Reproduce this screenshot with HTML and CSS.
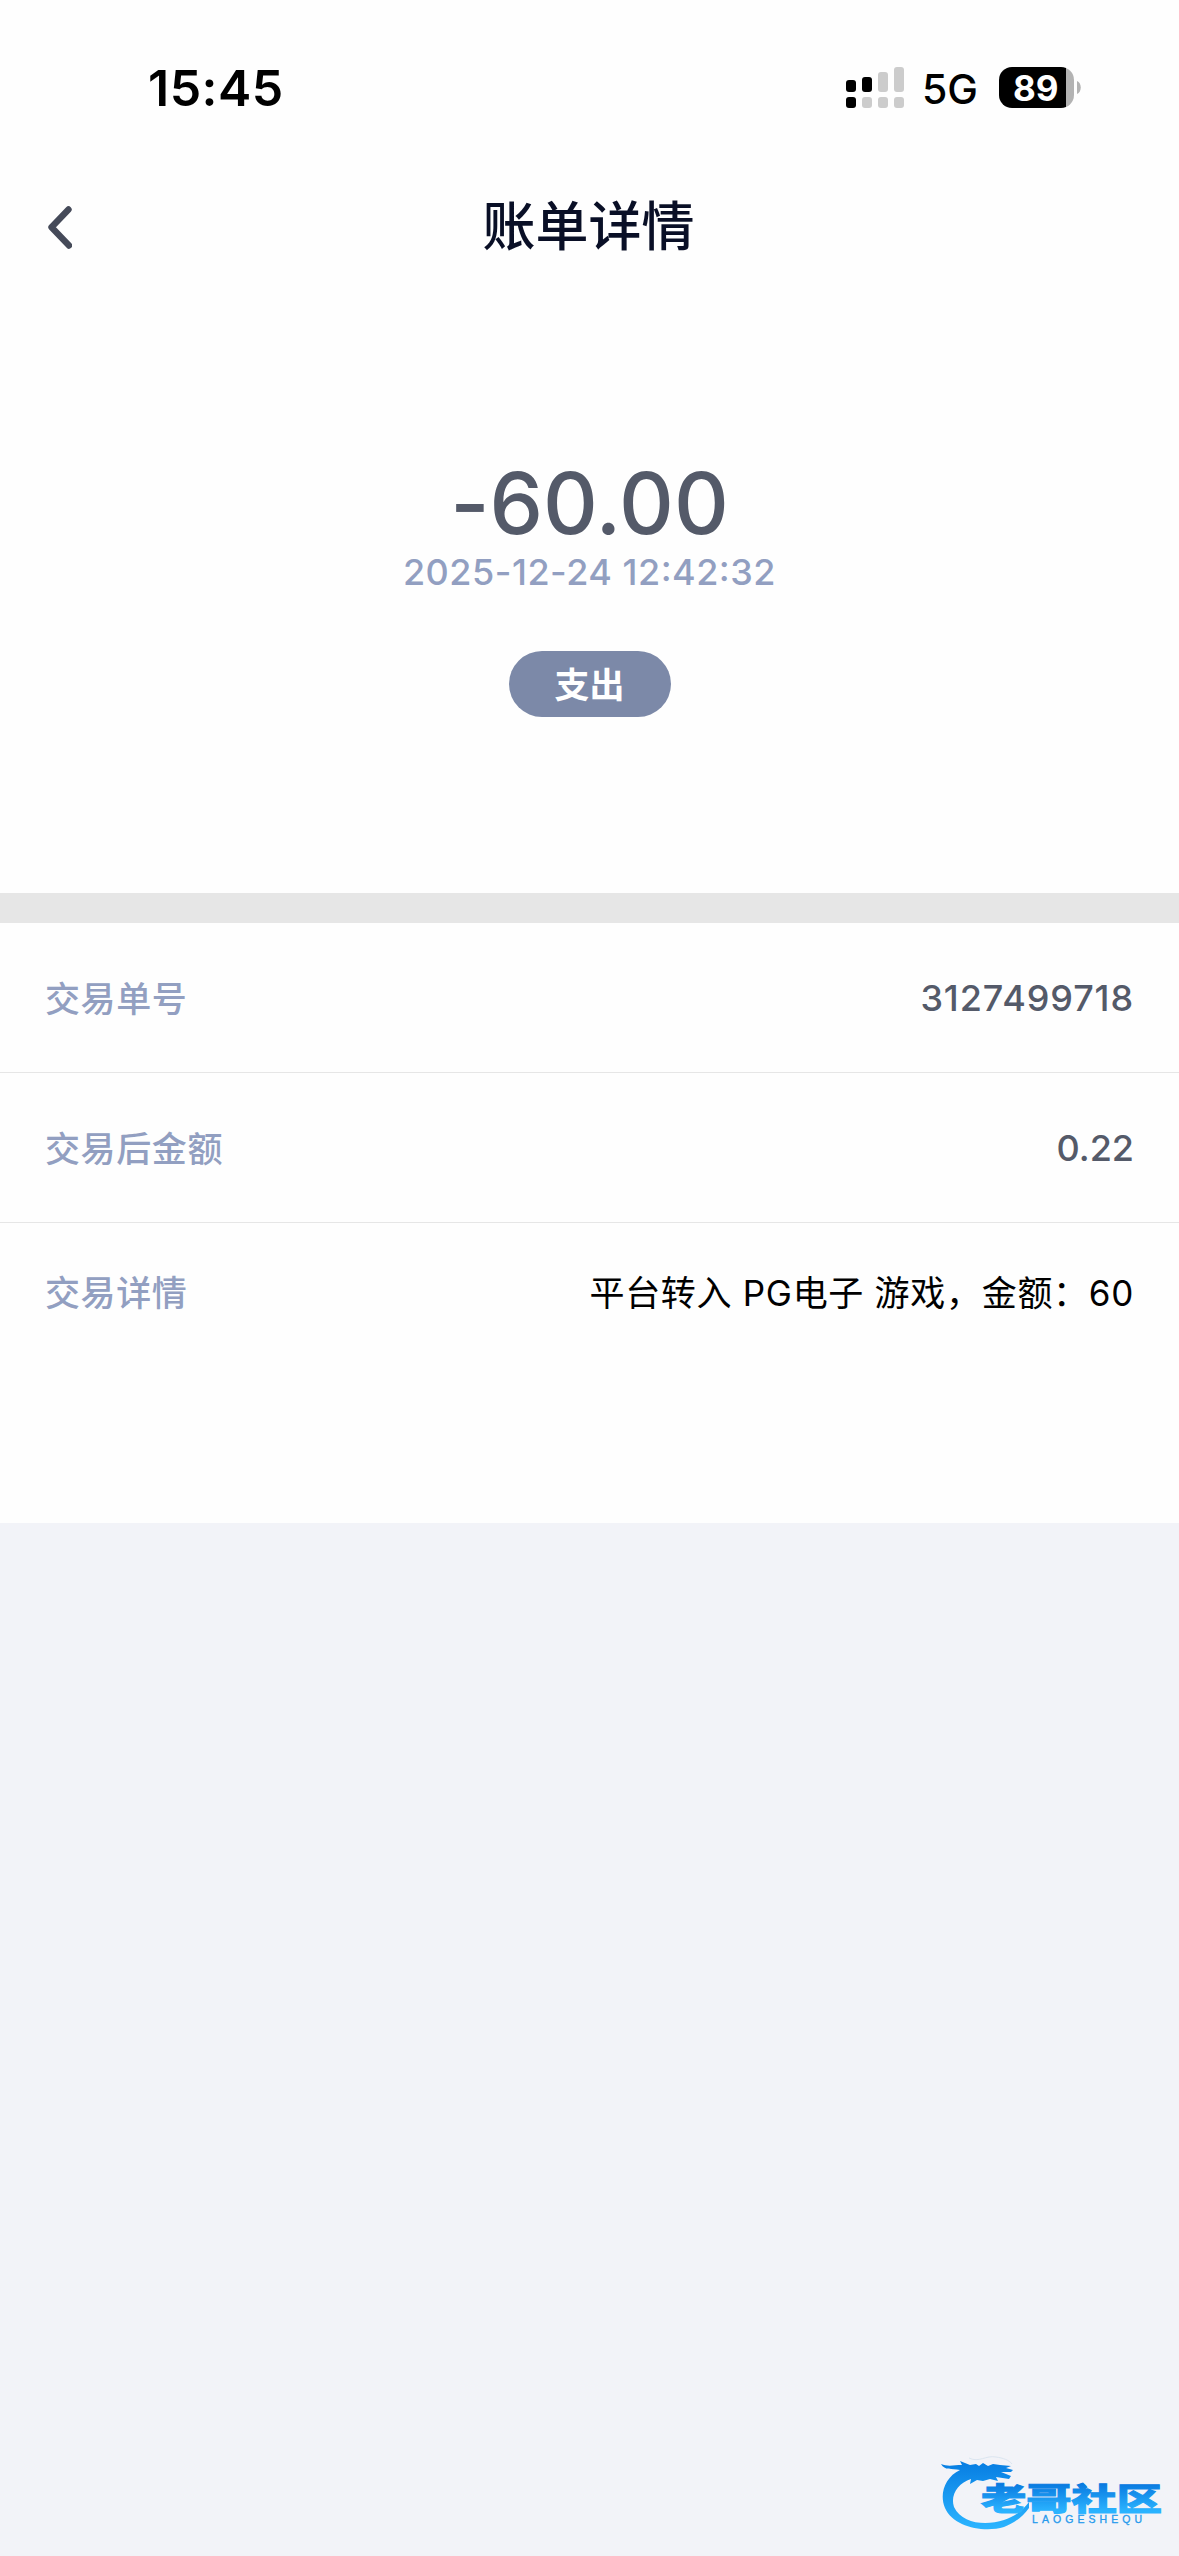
FILE: index.html
```html
<!DOCTYPE html>
<html lang="zh-CN">
<head>
<meta charset="utf-8">
<title>账单详情</title>
<link rel="stylesheet" href="styles.css">
</head>
<body>
<main class="screen">
  <header class="status">
    <span class="clock">15:45</span>
    <div class="indicators">
      <svg class="signal" width="58" height="41" viewBox="0 0 58 41">
        <g fill="#000"><rect y="13" width="10" height="12" rx="3"/><rect x="16" y="10" width="10" height="15" rx="3"/><rect y="30" width="10" height="11" rx="3"/></g>
        <g fill="#ccc"><rect x="32" y="5" width="10" height="20" rx="3"/><rect x="48" width="10" height="25" rx="3"/><rect x="16" y="30" width="10" height="11" rx="3"/><rect x="32" y="30" width="10" height="11" rx="3"/><rect x="48" y="30" width="10" height="11" rx="3"/></g>
      </svg>
      <span class="network">5G</span>
      <div class="battery"><span class="charge">89</span><svg class="cap" width="4" height="13" viewBox="0 0 4 13"><path d="M0 0C5 2 5 11 0 13z" fill="#b3b3b3"/></svg></div>
    </div>
  </header>
  <nav class="navbar">
    <svg class="back" width="24" height="43" viewBox="0 0 24 43"><path d="M20.5 3.5 3.5 21.3 21 39.5" fill="none" stroke="#454a59" stroke-width="6.4" stroke-linecap="round" stroke-linejoin="round"/></svg>
    <h1 class="title">账单详情</h1>
  </nav>
  <section class="summary">
    <div class="amount">-60.00</div>
    <time class="date">2025-12-24 12<span class="colon">:</span>42<span class="colon">:</span>32</time>
    <span class="pill">支出</span>
  </section>
  <dl class="details">
    <div class="row"><dt>交易单号</dt><dd class="serial">3127499718</dd></div>
    <div class="row"><dt>交易后金额</dt><dd>0.22</dd></div>
    <div class="row row-note"><dt>交易详情</dt><dd class="note">平台转入 PG电子 游戏，金额：60</dd></div>
  </dl>
  <footer class="brand">
    <svg width="226" height="84" viewBox="0 0 226 84">
      <defs><linearGradient id="blue" gradientUnits="userSpaceOnUse" x1="0" y1="14" x2="0" y2="78"><stop offset="0" stop-color="#087fe3"/><stop offset="1" stop-color="#2bb4ff"/></linearGradient>
      <linearGradient id="word" gradientUnits="userSpaceOnUse" x1="0" y1="33" x2="0" y2="61"><stop offset="0" stop-color="#0878df"/><stop offset="1" stop-color="#2ab3ff"/></linearGradient></defs>
      <path fill="url(#blue)" d="M1 14C8 17 14 15 22 15L20 11 30 15 36 14 39 16 43 13 48 16 53 14 60 15 71 16 66 18 73 20 71 22 61 22 71 26 69 29 56 27 58 31 50 29 43 31 37 30 30 34 31 29C18 33 10 45 14 57C22 74 46 76 64 70C76 66 83 60 89 52V58C82 68 72 74 64 77C44 83 13 77 5 58C-1 44 5 27 20 20C11 18 5 21 1 14Z"/>
      <path d="M29 8C39 13 46 5 56 7 63 8 69 10 72 14" fill="none" stroke="#dbe5f0" stroke-width="1"/>
      <text class="wordmark" x="41" y="60" textLength="181" lengthAdjust="spacingAndGlyphs" fill="url(#word)" stroke="url(#word)" stroke-width="1">老哥社区</text>
      <text class="latin" x="92" y="73" textLength="110" fill="#269aed" stroke="#269aed" stroke-width="0.3">LAOGESHEQU</text>
    </svg>
  </footer>
</main>
</body>
</html>
```
FILE: styles.css
```css
* { box-sizing: border-box; }
body { margin: 0; background: #f2f3f8; font-family: Inter, "Noto Sans CJK SC", sans-serif; }
.screen { width: 1179px; height: 2556px; display: flex; flex-direction: column; overflow: hidden; }
.status { height: 177px; padding: 58px 98px 0 148px; display: flex; justify-content: space-between; align-items: flex-start; background: #fefefe; }
.clock { font-size: 50px; line-height: 60px; font-weight: 600; letter-spacing: 0.5px; color: #000; }
.indicators { display: flex; align-items: flex-start; padding-top: 9px; }
.network { margin-left: 18px; width: 77px; font-size: 41px; line-height: 45px; font-weight: 450; white-space: nowrap; }
.battery { display: flex; align-items: center; gap: 3px; }
.charge { width: 75px; height: 41px; border-radius: 13px; background: linear-gradient(90deg, #000 67px, #b3b3b3 67px); color: #fff; font-size: 35px; font-weight: 700; line-height: 42px; padding-left: 14px; }
.navbar { height: 100px; padding: 0 49px 0 47px; display: grid; grid-template-columns: 100px 1fr 100px; align-items: center; background: #fefefe; }
.back { margin-left: 1px; }
.title { margin: 0; text-align: center; font-size: 53px; line-height: 74px; font-weight: 500; color: #090f26; }
.summary { height: 646px; padding-top: 176px; display: flex; flex-direction: column; align-items: center; background: #fefefe; border-bottom: 30px solid #e6e6e6; }
.amount { font-size: 85px; line-height: 102px; font-weight: 500; font-feature-settings: "calt" 0; color: #545a69; }
.date { margin-top: -5px; font-size: 36px; line-height: 44px; letter-spacing: 0.5px; font-weight: 480; font-feature-settings: "calt" 0; color: #929fc1; }
.colon { font-feature-settings: "case" 1; }
.pill { margin-top: 57px; width: 162px; height: 66px; border-radius: 33px; background: #7c89a8; color: #fff; font-size: 35px; line-height: 68px; font-weight: 600; text-align: center; }
.details { margin: 0; height: 600px; background: #fefefe; color: #929fc1; font-size: 36px; font-weight: 500; }
.row { display: flex; justify-content: space-between; align-items: center; height: 150px; padding: 0 45px; border-bottom: 1px solid #e6e6e6; line-height: 54px; }
.row dt { padding-top: 2px; font-size: 35px; letter-spacing: 0.6px; }
.row dd { margin: 0; color: #545a69; }
.row .serial { letter-spacing: 0.9px; }
.row-note { align-items: flex-start; height: 300px; padding-top: 43px; border: 0; }
.row-note dt { padding-top: 0; }
.row .note { color: #000; font-weight: 400; font-size: 35px; letter-spacing: 0.7px; }
.brand { margin-top: auto; height: 106px; padding-left: 940px; }
.brand svg { display: block; }
.wordmark { font: 900 31px "Noto Sans CJK SC", sans-serif; }
.latin { font: 10.5px "Liberation Sans", sans-serif; }
```
